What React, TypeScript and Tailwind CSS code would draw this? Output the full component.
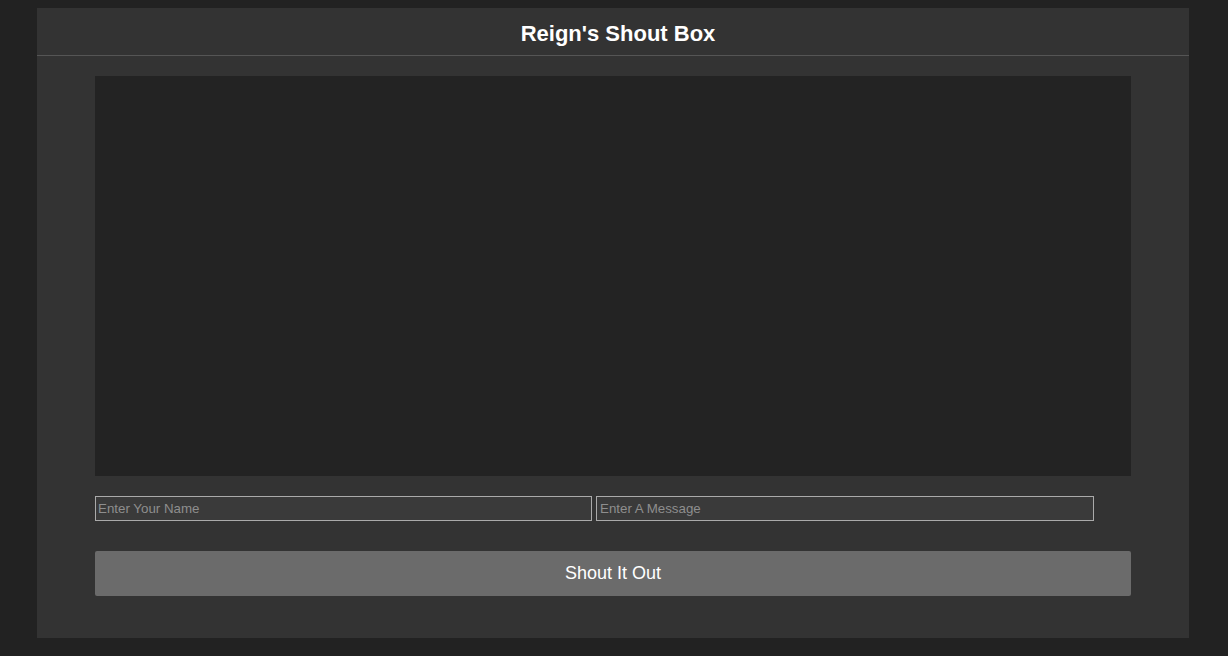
export default function App() {
  return (
    <div className="min-h-[656px] bg-[#222222] pt-2 font-['Liberation_Sans',Arial,sans-serif]">
      <div className="ml-[37px] w-[1152px] bg-[#333333]">
        <div className="flex h-[48px] items-center justify-center border-b border-[#555555] pt-[3px] pl-[10px]">
          <h1 className="text-[22px] font-bold text-white">Reign's Shout Box</h1>
        </div>
        <div className="px-[58px] pt-5 pb-[42px]">
          <div className="h-[400px] w-full bg-[#232323]"></div>
          <div className="mt-5 flex gap-1">
            <input
              type="text"
              placeholder="Enter Your Name"
              className="h-[25px] w-[497px] border border-[#aaaaaa] bg-[#3a3a3a] px-[2px] text-[13.33px] text-white placeholder:text-[#8e8e8e] outline-none"
            />
            <input
              type="text"
              placeholder="Enter A Message"
              className="h-[25px] w-[498px] border border-[#aaaaaa] bg-[#3a3a3a] px-[3px] text-[13.33px] text-white placeholder:text-[#8e8e8e] outline-none"
            />
          </div>
          <button className="mt-[30px] h-[45px] w-full rounded-[2px] bg-[#6b6b6b] text-[18px] text-white">
            Shout It Out
          </button>
        </div>
      </div>
    </div>
  );
}
